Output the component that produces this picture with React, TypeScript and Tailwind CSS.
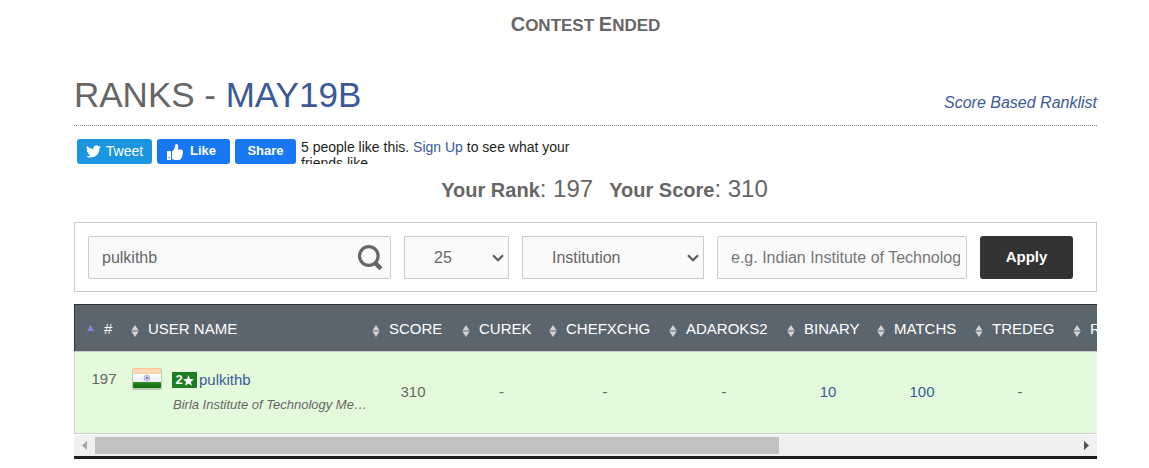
import React, { useState } from "react";

type Column = { name: string; width: string; value: string; link?: boolean };

const columns: Column[] = [
  { name: "SCORE", width: "w-[90px]", value: "310" },
  { name: "CUREK", width: "w-[87px]", value: "-" },
  { name: "CHEFXCHG", width: "w-[120px]", value: "-" },
  { name: "ADAROKS2", width: "w-[118px]", value: "-" },
  { name: "BINARY", width: "w-[90px]", value: "10", link: true },
  { name: "MATCHS", width: "w-[98px]", value: "100", link: true },
  { name: "TREDEG", width: "w-[98px]", value: "-" },
  { name: "REDONE", width: "w-[472px]", value: "-" },
];

function SortIcon() {
  return (
    <svg className="mt-[2px] shrink-0" width="8" height="12" viewBox="0 0 8 12" aria-hidden="true">
      <path d="M4 0 L7.6 5.6 H0.4 Z" fill="#d2d2d2" />
      <path d="M0.4 6.4 H7.6 L4 12 Z" fill="#d2d2d2" />
      <path d="M0.6 6 H7.4" stroke="#a5aaae" strokeWidth="0.8" />
    </svg>
  );
}

function SearchIcon() {
  return (
    <svg width="26" height="26" viewBox="0 0 26 26" fill="none" stroke="#666" aria-hidden="true">
      <circle cx="11.8" cy="11" r="9.3" strokeWidth="3.2" />
      <path d="M17.4 17.3 L24 23.8" strokeWidth="4.4" />
    </svg>
  );
}

function IndiaFlag() {
  return (
    <svg className="shrink-0" width="32" height="25" viewBox="0 0 32 25" role="img" aria-label="India">
      <defs>
        <linearGradient id="saffron" x1="0" y1="0" x2="0" y2="1">
          <stop offset="0" stopColor="#f9c08e" />
          <stop offset="0.35" stopColor="#ffddbd" />
          <stop offset="1" stopColor="#f8c9a0" />
        </linearGradient>
        <linearGradient id="white" x1="0" y1="0" x2="0" y2="1">
          <stop offset="0" stopColor="#ffffff" />
          <stop offset="1" stopColor="#eceef0" />
        </linearGradient>
        <linearGradient id="green" x1="0" y1="0" x2="0" y2="1">
          <stop offset="0" stopColor="#2d8b2a" />
          <stop offset="1" stopColor="#10690e" />
        </linearGradient>
      </defs>
      <rect x="1" y="2" width="30" height="22" rx="2" fill="#7d8f78" opacity="0.4" />
      <rect x="2" y="2" width="28" height="7" rx="1" fill="url(#saffron)" />
      <rect x="2" y="8" width="28" height="8" fill="url(#white)" />
      <rect x="2" y="16" width="28" height="6" rx="1" fill="url(#green)" />
      <circle cx="16" cy="12" r="3" fill="#cfd0ea" stroke="#b4b7dc" />
      <circle cx="16" cy="12" r="1.3" fill="#8084bb" />
    </svg>
  );
}

function SelectBox({ label, options, className }: { label: string; options: string[]; className: string }) {
  return (
    <div className={`relative ${className}`}>
      <select
        aria-label={label}
        className="h-[43px] w-full appearance-none border border-[#ccc] bg-[#fafafa] pl-[29px] pr-6 text-base text-[#666]"
      >
        {options.map((o) => (
          <option key={o}>{o}</option>
        ))}
      </select>
      <svg
        className="pointer-events-none absolute right-[5px] top-[18px]"
        width="12"
        height="8"
        viewBox="0 0 12 8"
        fill="none"
        stroke="#5c5c5c"
        strokeWidth="2.2"
        aria-hidden="true"
      >
        <path d="M1 1.2 L6 6.2 L11 1.2" />
      </svg>
    </div>
  );
}

function SocialBar() {
  return (
    <div className="flex h-[25px] items-start overflow-hidden pl-[3px] text-sm text-white">
      <button className="flex h-[25px] w-[75px] items-center justify-center gap-[5px] rounded-[3px] bg-[#1b95e0] pb-[2px]">
        <svg width="15" height="15" viewBox="0 0 24 24" fill="currentColor" className="mt-[2px]" aria-hidden="true">
          <path d="M23.95 4.57a10 10 0 0 1-2.82.77 4.96 4.96 0 0 0 2.16-2.72 9.9 9.9 0 0 1-3.12 1.19 4.92 4.92 0 0 0-8.38 4.48A13.93 13.93 0 0 1 1.64 3.16a4.92 4.92 0 0 0 1.52 6.57 4.9 4.9 0 0 1-2.23-.61v.06a4.92 4.92 0 0 0 3.95 4.83 4.98 4.98 0 0 1-2.21.08 4.94 4.94 0 0 0 4.6 3.42A9.87 9.87 0 0 1 0 19.54a13.99 13.99 0 0 0 7.56 2.21c9.05 0 13.99-7.5 13.99-13.98 0-.21 0-.42-.02-.63a9.94 9.94 0 0 0 2.42-2.57z" />
        </svg>
        Tweet
      </button>
      <button className="ml-[5px] flex h-[25px] w-[73px] items-center gap-[7px] rounded-[3px] bg-[#1877f2] pl-[10px] text-[13px] font-bold">
        <svg width="16" height="16" viewBox="0 0 16 16" fill="currentColor" aria-hidden="true">
          <rect x="0" y="7" width="4" height="9" rx="0.6" />
          <path d="M5 14.5V7.6C6.7 6.1 7.8 4.4 8 2.2 8.1.8 8.6 0 9.5 0c1.3 0 1.9 1.2 1.7 2.9L10.8 5.6h3.4c1.4 0 2.2 1.4 1.4 2.5.5.7.4 1.6-.2 2.2.4.8.2 1.6-.5 2.1.4 1-.1 2.1-1.2 2.3-.2.8-.8 1.3-1.8 1.3H8.6c-1.6 0-2.5-.5-3.6-1.5z" />
          <circle cx="2.1" cy="13.7" r="0.7" fill="#1877f2" />
        </svg>
        Like
      </button>
      <button className="ml-[5px] h-[25px] w-[61px] rounded-[3px] bg-[#1877f2] text-[13px] font-bold">Share</button>
      <p className="ml-[5px] w-[290px] text-sm leading-4 text-[#1c1e21]">
        5 people like this.{" "}
        <a href="#signup" className="text-[#385898]">
          Sign Up
        </a>{" "}
        to see what your friends like.
      </p>
    </div>
  );
}

function Filters() {
  const [query, setQuery] = useState("pulkithb");
  const [institution, setInstitution] = useState("");
  return (
    <form
      className="mt-4 flex gap-[13px] border border-[#ccc] pb-3 pl-[13px] pr-[23px] pt-[13px]"
      onSubmit={(e) => e.preventDefault()}
    >
      <div className="flex h-[43px] min-w-0 flex-[281_1_0%] items-center rounded-[2px] border border-[#ccc] bg-[#fafafa] pl-[13px] pr-[7px]">
        <input
          aria-label="Search user"
          value={query}
          onChange={(e) => setQuery(e.target.value)}
          className="min-w-0 flex-1 bg-transparent text-base text-[#666] outline-none"
        />
        <button type="submit" aria-label="Search">
          <SearchIcon />
        </button>
      </div>
      <SelectBox label="Rows per page" options={["25", "50", "100"]} className="w-[105px]" />
      <SelectBox label="Filter by" options={["Institution", "Country"]} className="w-[182px]" />
      <div className="flex h-[43px] min-w-0 flex-[229_1_0%] rounded-[2px] border border-[#ccc] bg-[#fafafa] pl-[13px] pr-[6px]">
        <input
          aria-label="Institution name"
          placeholder="e.g. Indian Institute of Technology"
          value={institution}
          onChange={(e) => setInstitution(e.target.value)}
          className="w-full min-w-0 bg-transparent text-base text-[#666] outline-none placeholder:text-[#777]"
        />
      </div>
      <button type="submit" className="h-[43px] w-[93px] rounded-[3px] bg-[#333] text-[15px] font-bold text-white">
        Apply
      </button>
    </form>
  );
}

function RankTable() {
  return (
    <div className="mt-3 border-b-[3px] border-[#1b1f1f]">
      <div className="overflow-hidden">
        <table className="w-[1467px] table-fixed border-separate border-spacing-0 text-[15px] text-[#666]">
          <thead>
            <tr className="h-[47px] bg-[#5b656d] text-left text-white">
              <th className="w-[53px] border-l border-t border-[#333] font-normal">
                <div className="flex items-center pl-3 pt-[3px]">
                  <svg className="mb-1 mr-[10px]" width="7" height="6" viewBox="0 0 7 6" aria-hidden="true">
                    <path d="M3.5 0 L7 6 H0 Z" fill="#7f86dc" />
                  </svg>
                  #
                </div>
              </th>
              <th className="w-[241px] border-t border-[#333] font-normal">
                <div className="flex items-center gap-[9px] pl-1 pt-[3px]">
                  <SortIcon />
                  USER NAME
                </div>
              </th>
              {columns.map((c) => (
                <th key={c.name} className={`${c.width} border-t border-[#333] font-normal`}>
                  <div className="flex items-center gap-[9px] pl-1 pt-[3px]">
                    <SortIcon />
                    {c.name}
                  </div>
                </th>
              ))}
            </tr>
          </thead>
          <tbody>
            <tr className="h-[83px] bg-[#e3fbdb]">
              <td className="border-y border-l border-[#ccc] pb-[26px] pl-[6px] text-center">197</td>
              <td className="border-y border-[#ccc] p-0 align-top">
                <div className="flex pl-1 pt-[14px]">
                  <IndiaFlag />
                  <div className="ml-[9px] min-w-0 pt-1">
                    <div className="flex items-center gap-[2px] leading-5">
                      <span className="flex h-4 w-[25px] items-center justify-center bg-[#1e7d22] text-[13px] font-bold text-white">
                        2
                        <svg width="11" height="11" viewBox="0 0 24 24" fill="currentColor" aria-label="star">
                          <path d="M12 0 L15.2 8.6 L24 9 L17.1 14.5 L19.5 23.3 L12 18.3 L4.5 23.3 L6.9 14.5 L0 9 L8.8 8.6 Z" />
                        </svg>
                      </span>
                      <a href="#pulkithb" className="text-[#3b5998]">
                        pulkithb
                      </a>
                    </div>
                    <p className="mt-[5px] w-[196px] truncate pl-px text-[13px] italic leading-5">
                      Birla Institute of Technology Mesra
                    </p>
                  </div>
                </div>
              </td>
              {columns.map((c) => (
                <td key={c.name} className="border-y border-[#ccc] text-center">
                  {c.link ? (
                    <a href={`#${c.name}`} className="text-[#3b5998]">
                      {c.value}
                    </a>
                  ) : (
                    c.value
                  )}
                </td>
              ))}
            </tr>
          </tbody>
        </table>
      </div>
      <div className="mt-px flex h-[21px] items-center bg-[#f0f0f0]">
        <button aria-label="Scroll left" className="flex w-[21px] justify-center">
          <svg width="5" height="9" viewBox="0 0 5 9" fill="#a3a3a3" aria-hidden="true">
            <path d="M5 0 V9 L0 4.5 Z" />
          </svg>
        </button>
        <div className="flex flex-1">
          <div className="h-[17px] flex-[684_1_0%] bg-[#c1c1c1]" />
          <div className="flex-[297_1_0%]" />
        </div>
        <button aria-label="Scroll right" className="flex w-[21px] justify-center">
          <svg width="5" height="9" viewBox="0 0 5 9" fill="#505050" aria-hidden="true">
            <path d="M0 0 V9 L5 4.5 Z" />
          </svg>
        </button>
      </div>
    </div>
  );
}

export default function App() {
  return (
    <main className="bg-white pl-[74px] pr-[52px] pt-2 font-['Liberation_Sans',Arial,sans-serif] text-[#666]">
      <h2 className="text-center text-[17px] font-bold uppercase leading-8">
        <span className="text-xl leading-8">C</span>ontest <span className="text-xl leading-8">E</span>nded
      </h2>
      <header className="mt-8 flex items-end justify-between border-b border-dotted border-[#888] pb-[10px]">
        <h1 className="text-[35px] leading-[41px]">
          RANKS -{" "}
          <a href="#MAY19B" className="text-[#3b5998]">
            MAY19B
          </a>
        </h1>
        <a href="#score" className="text-base italic leading-6 text-[#3b5998]">
          Score Based Ranklist
        </a>
      </header>
      <div className="mt-[13px]">
        <SocialBar />
      </div>
      <div className="mt-[9px] flex justify-center gap-4 pl-[38px] text-2xl leading-8">
        <p>
          <b className="text-xl leading-8">Your Rank</b>: 197
        </p>
        <p>
          <b className="text-xl leading-8">Your Score</b>: 310
        </p>
      </div>
      <Filters />
      <RankTable />
    </main>
  );
}
